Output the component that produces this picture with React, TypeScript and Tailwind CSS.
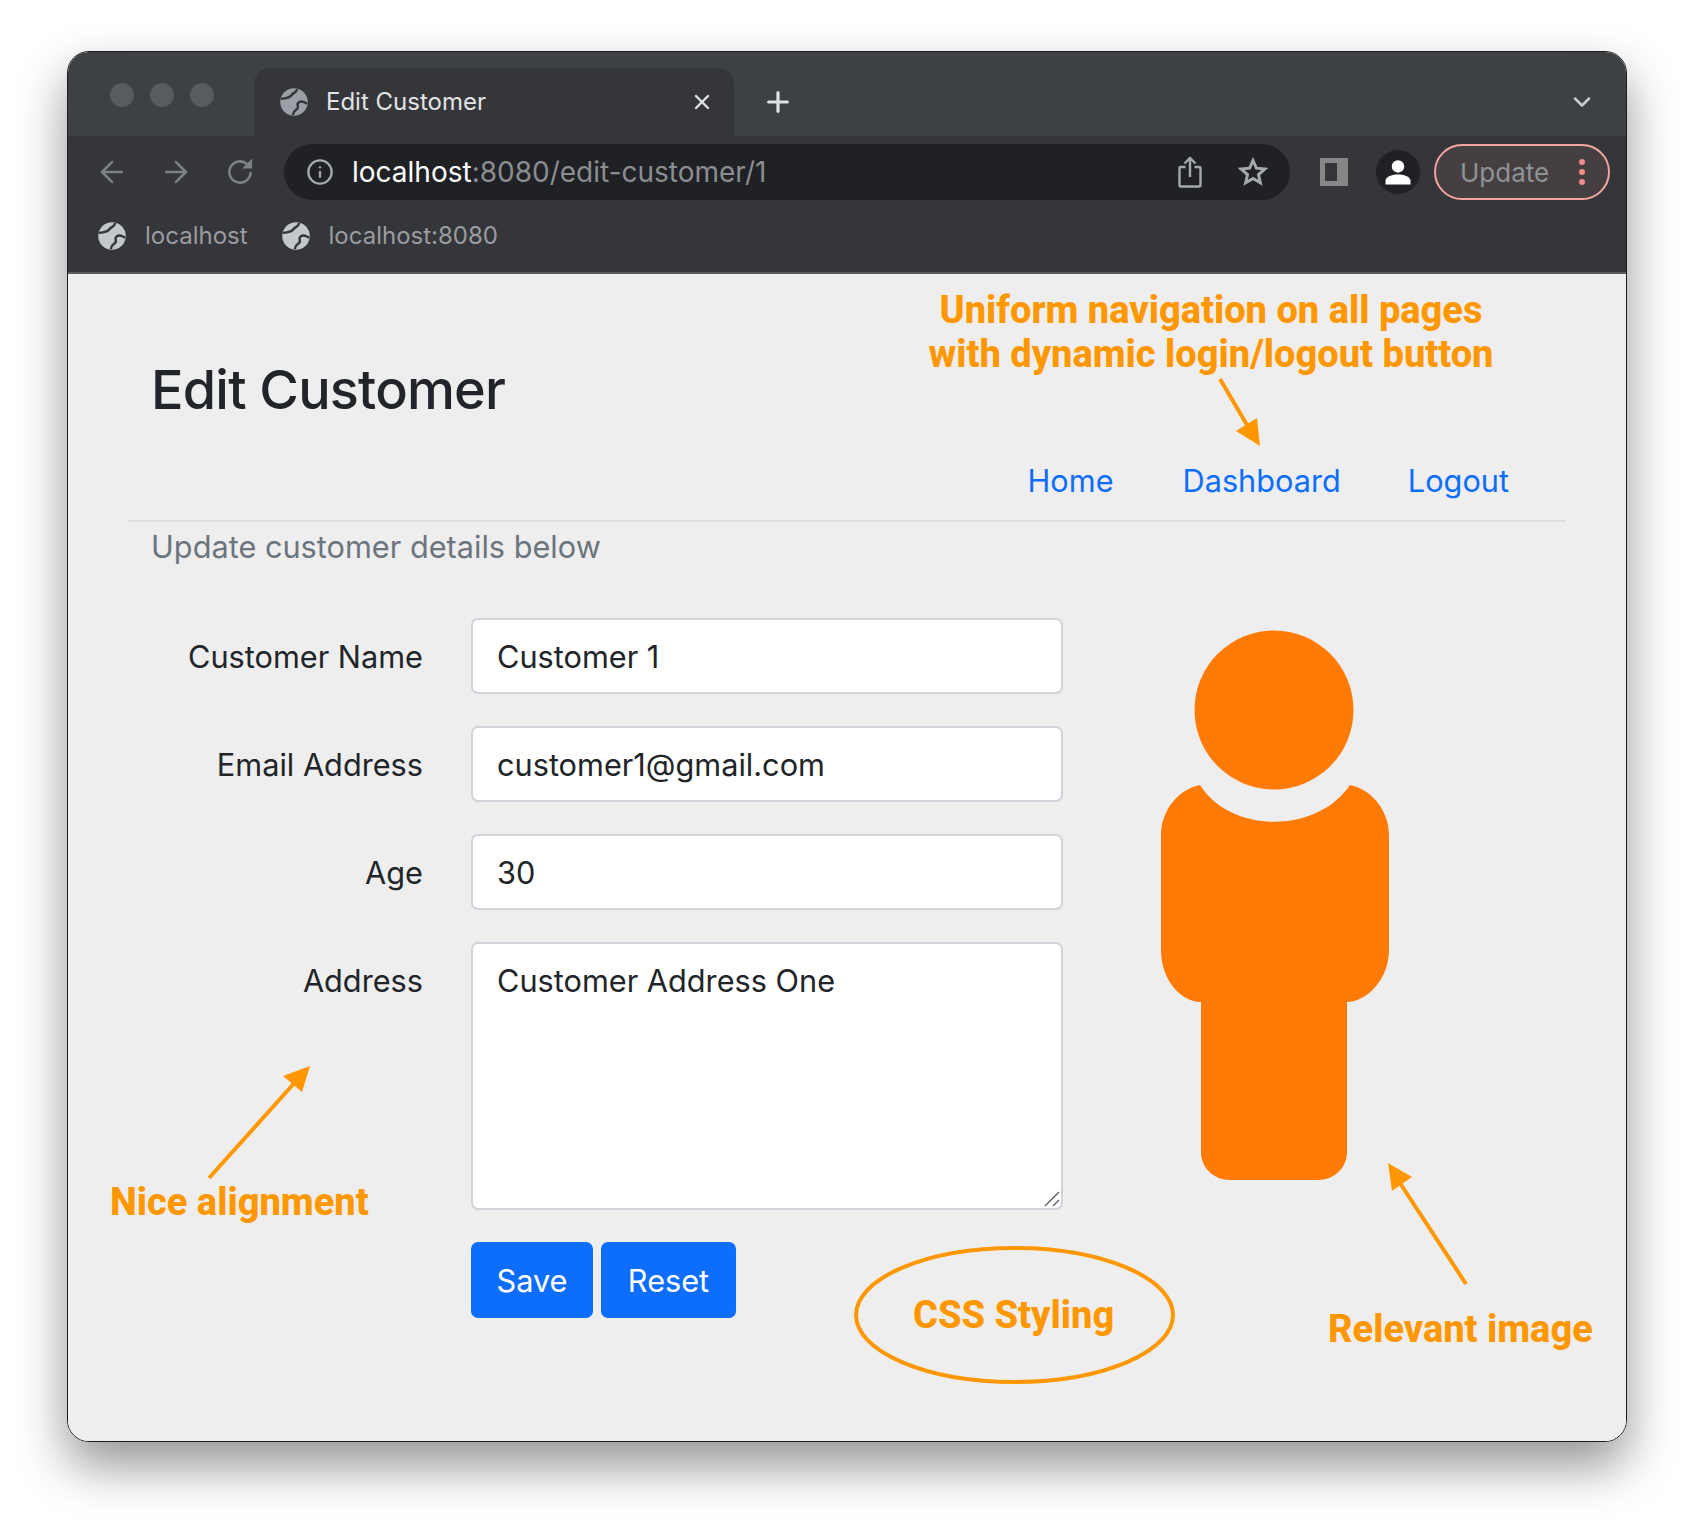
import { ArrowLeft, ArrowRight, Plus, X, ChevronDown, Info } from "lucide-react";

// Chrome's default favicon: a plain disc with two dark land outlines cut in it
function Globe({ className }: { className: string }) {
    return (
        <svg viewBox="0 0 24 24" className={className} fill="none">
            <circle cx="12" cy="12" r="11" fill="currentColor" />
            <path d="M14.5 1.5C14 5 11.5 4.5 10 6.5C8.5 8.5 6 9 1.5 9.5" stroke="#35363a" strokeWidth="2" />
            <path d="M22.5 13.5C20 11.5 17.5 11 15.5 12.5C13.5 14 16.5 16 14.5 17.5C12.5 19 11.5 19.5 11 22.5" stroke="#35363a" strokeWidth="2" />
        </svg>
    );
}

function FormRow({ label, value }: { label: string; value: string }) {
    return (
        <div className="flex items-center gap-[48px]">
            <label className="w-[274px] pt-[2px] text-right text-[30.7px] leading-[46px] text-[#212529]">{label}</label>
            <input
                readOnly
                defaultValue={value}
                className="h-[76px] w-[592px] rounded-[7px] border-2 border-[#ced4da] bg-white px-6 text-[30.7px] text-[#212529] outline-none"
            />
        </div>
    );
}

function Annotations() {
    return (
        <>
            <svg className="absolute left-0 top-0 h-[1526px] w-[1694px]" viewBox="0 0 1694 1526" fill="none">
                <line x1="1220" y1="379" x2="1250" y2="430" stroke="#ff9800" strokeWidth="4" />
                <polygon points="1260,446 1257,418 1236,431" fill="#ff9800" />
                <line x1="209" y1="1178" x2="297" y2="1080" stroke="#ff9800" strokeWidth="4" />
                <polygon points="310,1066 283,1076 302,1092" fill="#ff9800" />
                <line x1="1466" y1="1284" x2="1398" y2="1180" stroke="#ff9800" strokeWidth="4" />
                <polygon points="1388,1163 1412,1177 1392,1191" fill="#ff9800" />
                <ellipse cx="1014.5" cy="1315" rx="158.5" ry="67" stroke="#ff9800" strokeWidth="4" />
            </svg>
            <div className="absolute left-[811px] top-[288px] w-[800px] text-center font-['Roboto',sans-serif] text-[38px] font-extrabold leading-[44px] text-[#ff9800]">
                Uniform navigation on all pages
                <br />
                with dynamic login/logout button
            </div>
            <div className="absolute left-[110px] top-[1180px] font-['Roboto',sans-serif] text-[38px] font-extrabold leading-[44px] text-[#ff9800]">Nice alignment</div>
            <div className="absolute left-[913px] top-[1293px] font-['Roboto',sans-serif] text-[38px] font-extrabold leading-[44px] text-[#ff9800]">CSS Styling</div>
            <div className="absolute left-[1328px] top-[1307px] font-['Roboto',sans-serif] text-[38px] font-extrabold leading-[44px] text-[#ff9800]">Relevant image</div>
        </>
    );
}

export default function App() {
    return (
        <div className="relative h-[1526px] w-[1694px] overflow-hidden bg-white pl-[67px] pt-[51px] font-['Inter','Roboto',sans-serif]">
            <div className="flex h-[1391px] w-[1560px] flex-col overflow-hidden rounded-[22px] border border-[#1c1c1e] shadow-[0_24px_50px_rgba(0,0,0,0.42)]">
                {/* Tab strip */}
                <div className="flex h-[84px] shrink-0 items-end bg-[#3d4144]">
                    <div className="flex h-[68px] w-[186px] items-center gap-4 pb-[14px] pl-[42px]">
                        <span className="h-6 w-6 rounded-full bg-[#585c5f]" />
                        <span className="h-6 w-6 rounded-full bg-[#585c5f]" />
                        <span className="h-6 w-6 rounded-full bg-[#585c5f]" />
                    </div>
                    <div className="flex h-[68px] w-[480px] items-center rounded-t-[16px] bg-[#35363a] pl-[25px] pr-[20px]">
                        <Globe className="h-[30px] w-[30px] text-[#9aa0a6]" />
                        <span className="ml-[17px] flex-1 text-[24px] text-[#e2e3e5]">Edit Customer</span>
                        <X className="h-[24px] w-[24px] text-[#dfe1e5]" strokeWidth={2.4} />
                    </div>
                    <div className="flex h-[68px] flex-1 items-center pl-[28px] pr-[30px]">
                        <Plus className="h-[32px] w-[32px] text-[#dfe1e5]" strokeWidth={2.4} />
                        <ChevronDown className="ml-auto h-[28px] w-[28px] text-[#c8cacd]" strokeWidth={2.2} />
                    </div>
                </div>

                {/* Toolbar */}
                <div className="flex h-[72px] shrink-0 items-center bg-[#35363a] pl-[27px]">
                    <ArrowLeft className="h-[34px] w-[34px] text-[#7d8084]" strokeWidth={1.8} />
                    <ArrowRight className="ml-[30px] h-[34px] w-[34px] text-[#7d8084]" strokeWidth={1.8} />
                    <svg viewBox="0 0 24 24" className="ml-[30px] h-[34px] w-[34px] text-[#7d8084]" fill="none">
                        <path d="M19.5 12a7.5 7.5 0 1 1-2.4-5.5" stroke="currentColor" strokeWidth="1.8" />
                        <polygon points="20.5,2.5 20.5,9.5 13.5,9.5" fill="currentColor" />
                    </svg>
                    <div className="ml-[27px] flex h-[56px] w-[1006px] items-center rounded-full bg-[#202124] pl-[22px] pr-[22px]">
                        <Info className="h-[28px] w-[28px] text-[#a5a8ac]" strokeWidth={2} />
                        <span className="ml-[18px] text-[28px] text-white">
                            localhost<span className="text-[#8b8d91]">:8080/edit-customer/1</span>
                        </span>
                        <svg viewBox="0 0 24 32" className="ml-auto mr-[4px] h-[32px] w-[24px] text-[#a5a8ac]" fill="none" stroke="currentColor" strokeWidth="2.4">
                            <path d="M7.5 11H2.5a1 1 0 0 0-1 1v17a1.5 1.5 0 0 0 1.5 1.5h18a1.5 1.5 0 0 0 1.5-1.5V12a1 1 0 0 0-1-1h-5" />
                            <path d="M12 21V2M6.5 7.5L12 2l5.5 5.5" />
                        </svg>
                        <svg viewBox="0 0 30 30" className="ml-[32px] h-[30px] w-[30px] text-[#a5a8ac]" fill="none" stroke="currentColor" strokeWidth="3">
                            <polygon points="15,3.5 18.4,11.2 26.8,12 20.5,17.6 22.3,25.8 15,21.5 7.7,25.8 9.5,17.6 3.2,12 11.6,11.2" />
                        </svg>
                    </div>
                    <div className="ml-[30px] box-border h-[28px] w-[28px] border-[5px] border-r-[11px] border-[#868686]" />
                    <div className="ml-[28px] flex h-[44px] w-[44px] items-center justify-center rounded-full bg-[#202124]">
                        <svg viewBox="0 0 24 24" className="h-[30px] w-[30px]" fill="#fff">
                            <circle cx="12" cy="7.5" r="5" />
                            <path d="M2 22v-3c0-3.5 6-5 10-5s10 1.5 10 5v3z" />
                        </svg>
                    </div>
                    <div className="ml-[14px] flex h-[56px] w-[176px] items-center rounded-full border-2 border-[#f4a5a0] bg-[#453f41] pl-[24px]">
                        <span className="text-[26px] text-[#8f9296]">Update</span>
                        <span className="ml-[30px] flex flex-col gap-[4px]">
                            <span className="h-[6px] w-[6px] rounded-full bg-[#f28b82]" />
                            <span className="h-[6px] w-[6px] rounded-full bg-[#f28b82]" />
                            <span className="h-[6px] w-[6px] rounded-full bg-[#f28b82]" />
                        </span>
                    </div>
                </div>

                {/* Bookmarks */}
                <div className="flex h-[66px] shrink-0 items-center border-b-2 border-[#5a5b5e] bg-[#35363a] pb-[8px] pl-[29px]">
                    <Globe className="h-[30px] w-[30px] text-[#c4c7cb]" />
                    <span className="ml-[18px] text-[24px] text-[#9a9c9f]">localhost</span>
                    <Globe className="ml-[33px] h-[30px] w-[30px] text-[#c4c7cb]" />
                    <span className="ml-[18px] text-[24px] text-[#9a9c9f]">localhost:8080</span>
                </div>

                {/* Page */}
                <div className="flex-1 bg-[#eeeeee] pl-[59px] pr-[60px]">
                    <div className="relative h-[248px] border-b-2 border-[#dee2e6]">
                        <h1 className="absolute left-[24px] top-[78px] text-[54px] font-[550] leading-[76px] tracking-[-0.8px] text-[#212529]">Edit Customer</h1>
                        <nav className="absolute bottom-[16px] right-[57px] flex text-[30.7px] leading-[46px] text-[#0d6efd]">
                            <a>Home</a>
                            <a className="ml-[69px]">Dashboard</a>
                            <a className="ml-[67px]">Logout</a>
                        </nav>
                    </div>
                    <p className="ml-[24px] mt-[2px] text-[30.7px] leading-[46px] text-[#6c757d]">Update customer details below</p>

                    <div className="mt-[48px] flex">
                        <div className="flex flex-col gap-[32px] pl-[22px]">
                            <FormRow label="Customer Name" value="Customer 1" />
                            <FormRow label="Email Address" value="customer1@gmail.com" />
                            <FormRow label="Age" value="30" />
                            <div className="flex gap-[48px]">
                                <label className="mt-[16px] w-[274px] text-right text-[30.7px] leading-[46px] text-[#212529]">Address</label>
                                <div className="relative h-[268px] w-[592px]">
                                    <textarea
                                        readOnly
                                        defaultValue="Customer Address One"
                                        className="h-full w-full resize-none rounded-[7px] border-2 border-[#ced4da] bg-white px-6 pb-[13px] pt-[14px] text-[30.7px] leading-[46px] text-[#212529] outline-none"
                                    />
                                    <svg viewBox="0 0 16 16" className="absolute bottom-[3px] right-[3px] h-4 w-4" stroke="#555" strokeWidth="1.2">
                                        <line x1="15" y1="1" x2="1" y2="15" />
                                        <line x1="15" y1="9" x2="9" y2="15" />
                                    </svg>
                                </div>
                            </div>
                            <div className="flex gap-2 pl-[322px]">
                                <button className="h-[76px] w-[122px] rounded-[7px] bg-[#0d6efd] pt-[2px] text-[30.7px] text-white">Save</button>
                                <button className="h-[76px] w-[135px] rounded-[7px] bg-[#0d6efd] pt-[2px] text-[30.7px] text-white">Reset</button>
                            </div>
                        </div>
                        <svg viewBox="0 0 228 550" className="ml-[98px] mt-[12px] h-[550px] w-[228px]" fill="#ff7b05">
                            <circle cx="113" cy="80" r="79.5" />
                            <path d="M39 155C70 204 156 204 189 155C210 159 228 180 228 205V320C228 350 205 372 186 372V522C186 538 173 550 157 550H69C53 550 40 538 40 522V372C20 372 0 350 0 320V205C0 180 18 159 39 155Z" />
                        </svg>
                    </div>
                </div>
            </div>
            <Annotations />
        </div>
    );
}
